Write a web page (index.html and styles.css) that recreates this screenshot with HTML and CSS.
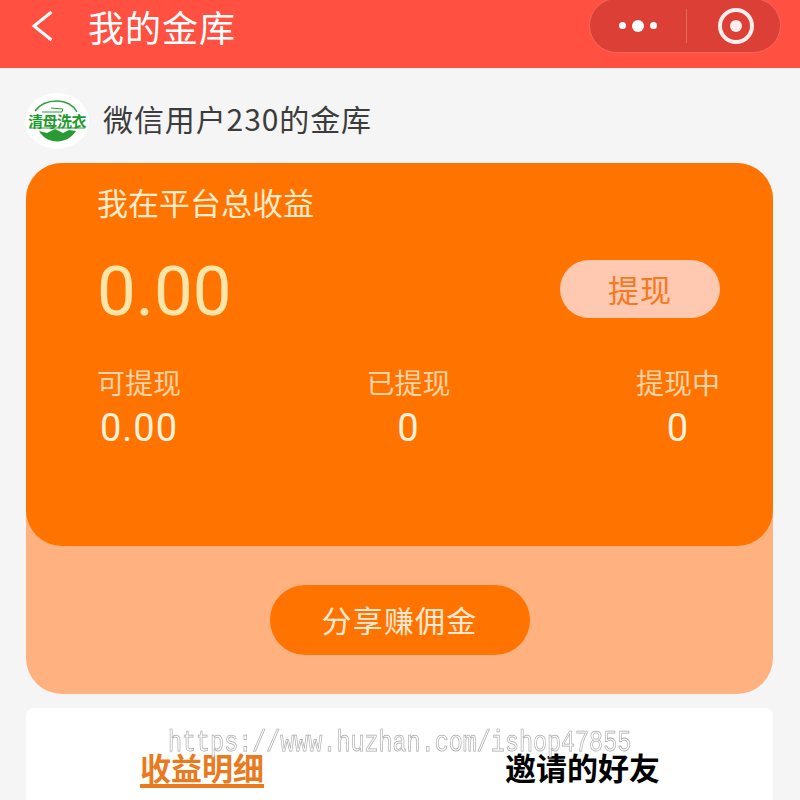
FILE: index.html
```html
<!DOCTYPE html>
<html>
<head>
  <meta charset="utf-8">
  <link rel="stylesheet" href="styles.css">
</head>

<body>

<header class="topbar">
  <svg class="back" width="24" height="34" viewBox="0 0 24 34"><path d="M21.5 3 L4 17 L21.5 31" fill="none" stroke="#fff" stroke-width="3"/></svg>
  <h1 class="title">我的金库</h1>
  <div class="capsule">
    <div class="capsule-dots"><i class="dot"></i><i class="dot dot-big"></i><i class="dot"></i></div>
    <div class="capsule-line"></div>
    <div class="capsule-target"><i class="target-inner"></i></div>
  </div>
</header>

<div class="user">
  <div class="avatar">
    <svg class="avatar-arc" width="64" height="56" viewBox="0 0 64 56">
      <path d="M10 18 C15 11 24 8 32 8 C41 8 48 12 52 19" fill="none" stroke="#2e9e3a" stroke-width="1.5"/>
      <path d="M17 19 H37 L38 16 L26 15" fill="none" stroke="#2e9e3a" stroke-width="1"/>
      <path d="M4 35 H60" fill="none" stroke="#2e9e3a" stroke-width="1"/>
      <path d="M14 38 C22 52 42 52 51 38 L44 37 L38 40 L30 36 L22 40 Z" fill="#2a9a35"/>
    </svg>
    <span class="avatar-text">清母洗衣</span>
  </div>
  <div class="user-name">微信用户230的金库</div>
</div>

<section class="wallet">
  <div class="wallet-main">
    <div class="wallet-label">我在平台总收益</div>
    <div class="wallet-row">
      <div class="wallet-total">0.00</div>
      <div class="withdraw-btn">提现</div>
    </div>
    <div class="stats">
      <div class="stat"><div class="stat-name">可提现</div><div class="stat-num">0.00</div></div>
      <div class="stat"><div class="stat-name">已提现</div><div class="stat-num">0</div></div>
      <div class="stat"><div class="stat-name">提现中</div><div class="stat-num">0</div></div>
    </div>
  </div>
  <div class="wallet-foot">
    <div class="share-btn">分享赚佣金</div>
  </div>
</section>

<section class="panel">
  <div class="tabs">
    <div class="tab tab-active">收益明细</div>
    <div class="tab">邀请的好友</div>
  </div>
</section>

<div class="watermark">https://www.huzhan.com/ishop47855</div>

</body>
</html>
```

FILE: styles.css
```css
* {
  box-sizing: border-box;
}

html, body {
  height: 800px;
  overflow: hidden;
}

body {
  margin: 0;
  background: #f5f5f5;
  font-family: "Noto Sans CJK SC", Roboto, sans-serif;
  position: relative;
}

.topbar {
  height: 68px;
  background: #ff5042;
  display: flex;
  align-items: center;
  padding-left: 30px;
  position: relative;
}

.back {
  margin-top: -16px;
}

.title {
  margin: -16px 0 0 34px;
  font-size: 36px;
  font-weight: 400;
  color: #fff;
  line-height: 36px;
  letter-spacing: 1px;
}

.capsule {
  position: absolute;
  left: 589px;
  top: -2px;
  width: 192px;
  height: 55px;
  border-radius: 28px;
  background: #dc3f36;
  border: 1px solid #ee6a5f;
  display: flex;
  align-items: center;
}

.capsule-dots {
  width: 96px;
  display: flex;
  justify-content: center;
  align-items: center;
  gap: 6px;
}

.dot {
  width: 7px;
  height: 7px;
  border-radius: 50%;
  background: #fff;
}

.dot-big {
  width: 12px;
  height: 12px;
}

.capsule-line {
  width: 1px;
  height: 34px;
  background: #e8685e;
}

.capsule-target {
  width: 36px;
  height: 36px;
  margin-left: 31px;
  border: 4px solid #fbeeed;
  border-radius: 50%;
  display: flex;
  align-items: center;
  justify-content: center;
}

.target-inner {
  width: 12px;
  height: 12px;
  border-radius: 50%;
  background: #fbeeed;
}

.user {
  height: 95px;
  display: flex;
  align-items: center;
  padding: 11px 0 0 25px;
}

.avatar {
  width: 64px;
  height: 56px;
  border-radius: 50%;
  background: #fff;
  position: relative;
  display: flex;
  align-items: center;
  justify-content: center;
}

.avatar-arc {
  position: absolute;
  left: 0;
  top: 0;
}

.avatar-text {
  position: relative;
  font-size: 15px;
  font-weight: 700;
  line-height: 16px;
  letter-spacing: -0.6px;
  color: #1f9a2c;
  white-space: nowrap;
}

.user-name {
  margin: -7px 0 0 14px;
  font-size: 30px;
  line-height: 42px;
  color: #3c3c3c;
  letter-spacing: 0.9px;
}

.wallet {
  margin-left: 26px;
  width: 747px;
  height: 531px;
  background: #ffb27f;
  border-radius: 36px;
}

.wallet-main {
  height: 383px;
  background: #ff7300;
  border-radius: 36px;
  padding: 19px 53px 0 71px;
}

.wallet-label {
  font-size: 31px;
  line-height: 40px;
  color: #ffeccb;
}

.wallet-row {
  height: 92px;
  margin-top: 21px;
  display: flex;
  align-items: center;
  justify-content: space-between;
}

.wallet-total {
  font-family: Roboto, sans-serif;
  font-size: 69px;
  margin-top: 4px;
  color: #ffe6a8;
}

.withdraw-btn {
  width: 160px;
  height: 58px;
  border-radius: 29px;
  background: #ffc8b0;
  color: #f47a22;
  font-size: 31px;
  line-height: 58px;
  text-align: center;
  letter-spacing: 1px;
}

.stats {
  margin-top: 28px;
  display: flex;
  justify-content: space-between;
}

.stat {
  width: 84px;
  text-align: center;
}

.stat-name {
  font-size: 28px;
  line-height: 38px;
  white-space: nowrap;
  color: #ffd3a6;
}

.stat-num {
  font-family: Roboto, sans-serif;
  font-size: 38px;
  line-height: 50px;
  margin-top: 2px;
  color: #fff2dc;
  letter-spacing: 1px;
}

.wallet-foot {
  height: 148px;
  display: flex;
  align-items: center;
  justify-content: center;
}

.share-btn {
  width: 260px;
  height: 70px;
  border-radius: 35px;
  background: #ff7300;
  color: #ffe9d2;
  font-size: 30px;
  line-height: 68px;
  text-align: center;
  letter-spacing: 1.2px;
}

.panel {
  margin: 14px 0 0 26px;
  width: 747px;
  height: 92px;
  background: #fff;
  border-radius: 8px 8px 0 0;
}

.tabs {
  padding-top: 43px;
  display: flex;
}

.tab {
  font-size: 31px;
  font-weight: 700;
  line-height: 32px;
  color: #000;
  margin-left: 114px;
  height: 37px;
}

.tab + .tab {
  margin-left: 241px;
}

.tab-active {
  color: #ea7a1e;
  border-bottom: 4px solid #ea7a1e;
}

.watermark {
  position: absolute;
  left: 168px;
  top: 732px;
  font-family: "Liberation Mono", monospace;
  font-size: 23.4px;
  line-height: 22px;
  color: #fff;
  -webkit-text-stroke: 0.6px #a9a9a9;
  white-space: nowrap;
  transform: scaleY(1.25);
  will-change: transform;
}
```
